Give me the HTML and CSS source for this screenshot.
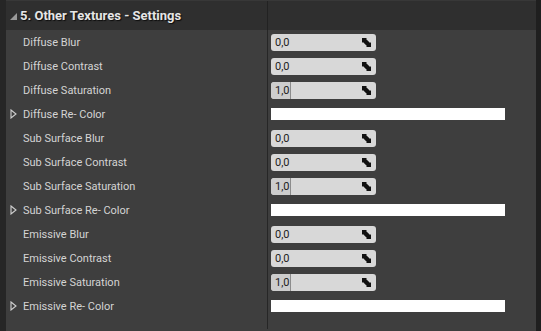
FILE: index.html
```html
<!DOCTYPE html>
<html lang="en">
<head>
  <meta charset="UTF-8" />
  <title>Other Textures - Settings</title>
  <link rel="stylesheet" href="styles.css">
</head>
<body>
  <div class="panel">
    <div class="edge-left"></div>
    <div class="main">
      <div class="header">
        <div class="header-name">
          <svg class="collapse" width="7" height="7" viewBox="0 0 7 7"><polygon points="7,0 7,7 0,7" fill="#9a9a9a"/></svg>
          <span>5. Other Textures - Settings</span>
        </div>
        <div class="header-value"></div>
      </div>

      <div class="row"><div class="name">Diffuse Blur</div><div class="value"><div class="num"><span>0,0</span><svg class="spin" viewBox="0 0 10 10"><path d="M0 0H5.5L4.5 1L9 5.5L10 4.5V10H4.5L5.5 9L1 4.5L0 5.5Z" fill="#111"/></svg></div></div></div>
      <div class="row"><div class="name">Diffuse Contrast</div><div class="value"><div class="num"><span>0,0</span><svg class="spin" viewBox="0 0 10 10"><path d="M0 0H5.5L4.5 1L9 5.5L10 4.5V10H4.5L5.5 9L1 4.5L0 5.5Z" fill="#111"/></svg></div></div></div>
      <div class="row"><div class="name">Diffuse Saturation</div><div class="value"><div class="num"><div class="fill"></div><span>1,0</span><svg class="spin" viewBox="0 0 10 10"><path d="M0 0H5.5L4.5 1L9 5.5L10 4.5V10H4.5L5.5 9L1 4.5L0 5.5Z" fill="#111"/></svg></div></div></div>
      <div class="row"><div class="name"><svg class="expand" width="7" height="10" viewBox="0 0 7 10"><polygon points="1,1 6,5 1,9" fill="none" stroke="#cfcfcf" stroke-width="1.1"/></svg>Diffuse Re- Color</div><div class="value"><div class="color"></div></div></div>

      <div class="row"><div class="name">Sub Surface Blur</div><div class="value"><div class="num"><span>0,0</span><svg class="spin" viewBox="0 0 10 10"><path d="M0 0H5.5L4.5 1L9 5.5L10 4.5V10H4.5L5.5 9L1 4.5L0 5.5Z" fill="#111"/></svg></div></div></div>
      <div class="row"><div class="name">Sub Surface Contrast</div><div class="value"><div class="num"><span>0,0</span><svg class="spin" viewBox="0 0 10 10"><path d="M0 0H5.5L4.5 1L9 5.5L10 4.5V10H4.5L5.5 9L1 4.5L0 5.5Z" fill="#111"/></svg></div></div></div>
      <div class="row"><div class="name">Sub Surface Saturation</div><div class="value"><div class="num"><div class="fill"></div><span>1,0</span><svg class="spin" viewBox="0 0 10 10"><path d="M0 0H5.5L4.5 1L9 5.5L10 4.5V10H4.5L5.5 9L1 4.5L0 5.5Z" fill="#111"/></svg></div></div></div>
      <div class="row"><div class="name"><svg class="expand" width="7" height="10" viewBox="0 0 7 10"><polygon points="1,1 6,5 1,9" fill="none" stroke="#cfcfcf" stroke-width="1.1"/></svg>Sub Surface Re- Color</div><div class="value"><div class="color"></div></div></div>

      <div class="row"><div class="name">Emissive Blur</div><div class="value"><div class="num"><span>0,0</span><svg class="spin" viewBox="0 0 10 10"><path d="M0 0H5.5L4.5 1L9 5.5L10 4.5V10H4.5L5.5 9L1 4.5L0 5.5Z" fill="#111"/></svg></div></div></div>
      <div class="row"><div class="name">Emissive Contrast</div><div class="value"><div class="num"><span>0,0</span><svg class="spin" viewBox="0 0 10 10"><path d="M0 0H5.5L4.5 1L9 5.5L10 4.5V10H4.5L5.5 9L1 4.5L0 5.5Z" fill="#111"/></svg></div></div></div>
      <div class="row"><div class="name">Emissive Saturation</div><div class="value"><div class="num"><div class="fill"></div><span>1,0</span><svg class="spin" viewBox="0 0 10 10"><path d="M0 0H5.5L4.5 1L9 5.5L10 4.5V10H4.5L5.5 9L1 4.5L0 5.5Z" fill="#111"/></svg></div></div></div>
      <div class="row"><div class="name"><svg class="expand" width="7" height="10" viewBox="0 0 7 10"><polygon points="1,1 6,5 1,9" fill="none" stroke="#cfcfcf" stroke-width="1.1"/></svg>Emissive Re- Color</div><div class="value"><div class="color"></div></div></div>

      <div class="row tail"><div class="name"></div><div class="value"></div></div>
    </div>
    <div class="edge-right"></div>
  </div>
</body>
</html>
```

FILE: styles.css
```css
html, body { margin: 0; padding: 0; }
body {
  background: #3e3e3e;
  font-family: Roboto, "Liberation Sans", sans-serif;
  width: 541px;
  height: 331px;
  overflow: hidden;
}
.panel { display: flex; height: 331px; }
.edge-left { width: 6px; background: #262626; }
.edge-right { width: 5px; background: #1f1f1f; }
.main { flex: 1; display: flex; flex-direction: column; background: #3e3e3e; }

/* Category header */
.header {
  display: grid;
  grid-template-columns: 262px 1fr;
  height: 30px;
  background: #2f2f2f;
  border-top: 1px solid #383838;
  box-sizing: border-box;
}
.header-name {
  display: flex;
  align-items: center;
  border-right: 1px solid #222;
  color: #e6e6e6;
  font-size: 13px;
  font-weight: bold;
  text-shadow: 1px 1px 1px #0c0c0c;
}
.collapse { margin: 1px 3px 0 4px; }

/* Property rows */
.row {
  display: grid;
  grid-template-columns: 262px 1fr;
  height: 24px;
}
.name {
  display: flex;
  align-items: center;
  padding-left: 17px;
  border-right: 1px solid #262626;
  color: #d4d4d4;
  font-size: 11px;
  position: relative;
}
.expand { position: absolute; left: 4px; top: 7px; }
.value { display: flex; align-items: flex-start; padding-left: 3px; }
.num {
  position: relative;
  margin-top: 4px;
  width: 105px;
  height: 17px;
  background: #d8d8d8;
  border-radius: 3px;
  display: flex;
  align-items: center;
  overflow: hidden;
}
.num span { position: relative; padding-left: 4px; font-size: 11px; color: #1c1c1c; }
.fill {
  position: absolute;
  left: 0;
  top: 0;
  bottom: 0;
  width: 19px;
  background: #cdcdcd;
  border-right: 1px solid #8c8c8c;
  border-radius: 3px 0 0 3px;
}
.spin { position: absolute; right: 5px; top: 4px; width: 9px; height: 9px; }
.color { margin-top: 6px; width: 234px; height: 12px; background: #fff; }
.tail { height: 11px; }
```
